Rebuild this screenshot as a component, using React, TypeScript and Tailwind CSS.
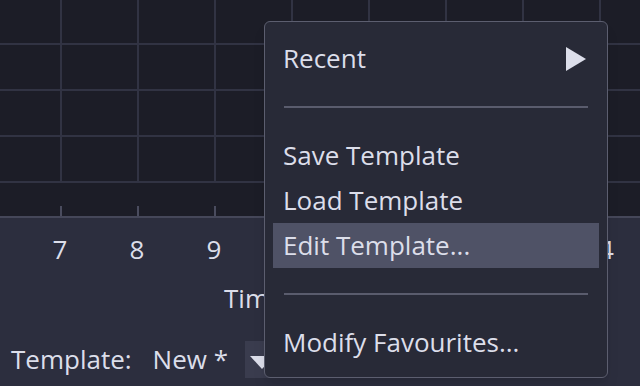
const COLS = [61, 138, 215, 292, 369, 446, 523, 600];
const ROWS = [44, 90, 136, 182];
const LABELS: [string, number][] = [
  ['7', 60],
  ['8', 137],
  ['9', 214],
  ['14', 599],
];

function Grid() {
  return (
    <svg width="640" height="218" className="block">
      <rect width="640" height="218" fill="#1c1d27" />
      {ROWS.map((y) => (
        <line key={y} x1="0" x2="640" y1={y} y2={y} stroke="#313343" strokeWidth="2" />
      ))}
      {COLS.map((x) => (
        <g key={x}>
          <line x1={x} x2={x} y1="0" y2="183" stroke="#313343" strokeWidth="2" />
          <line x1={x} x2={x} y1="206" y2="216" stroke="#4a4c5e" strokeWidth="2" />
        </g>
      ))}
      <rect y="216" width="640" height="2" fill="#454759" />
    </svg>
  );
}

function MenuItem({ label, active }: { label: string; active?: boolean }) {
  return (
    <div className={`h-[45px] mx-[8px] px-[10px] flex items-center ${active ? 'bg-[#4f5266]' : ''}`}>
      {label}
    </div>
  );
}

function Separator() {
  return (
    <div className="h-[52px] flex items-center px-[19px]">
      <div className="h-[2px] w-full bg-[#5a5c6d]" />
    </div>
  );
}

export default function App() {
  return (
    <div
      className="relative w-[640px] h-[386px] overflow-hidden bg-[#2c2e3e] text-[#dcdeea] text-[26px]"
      style={{ fontFamily: '"Open Sans", "Noto Sans", sans-serif' }}
    >
      <Grid />

      <div className="relative h-[60px]">
        {LABELS.map(([l, x]) => (
          <span key={l} className="absolute top-[18px] -translate-x-1/2 leading-none" style={{ left: x }}>
            {l}
          </span>
        ))}
      </div>

      <div className="pl-[224px] h-[44px] leading-[40px]">Time (hours)</div>

      <div className="flex items-center pl-[11px] h-[38px] mt-[18px]">
        <span>Template:</span>
        <span className="ml-[21px]">New *</span>
        <div className="ml-[17px] w-[34px] h-[37px] bg-[#3a3c4e] flex items-start justify-center pt-[15px]">
          <svg width="24" height="13" viewBox="0 0 24 13">
            <polygon points="0,0 24,0 12,13" fill="#dcdeea" />
          </svg>
        </div>
      </div>

      <div className="absolute left-[264px] top-[21px] w-[344px] h-[357px] rounded-[6px] border-[1.5px] border-[#5c5e6f] bg-[#282a37] pt-[14px] shadow-lg">
        <div className="h-[45px] pl-[18px] pr-[20px] flex items-center justify-between">
          <span>Recent</span>
          <svg width="22" height="24" viewBox="0 0 22 24">
            <polygon points="1,0 21,12 1,24" fill="#dcdeea" />
          </svg>
        </div>
        <Separator />
        <MenuItem label="Save Template" />
        <MenuItem label="Load Template" />
        <MenuItem label="Edit Template..." active />
        <Separator />
        <MenuItem label="Modify Favourites..." />
      </div>
    </div>
  );
}
